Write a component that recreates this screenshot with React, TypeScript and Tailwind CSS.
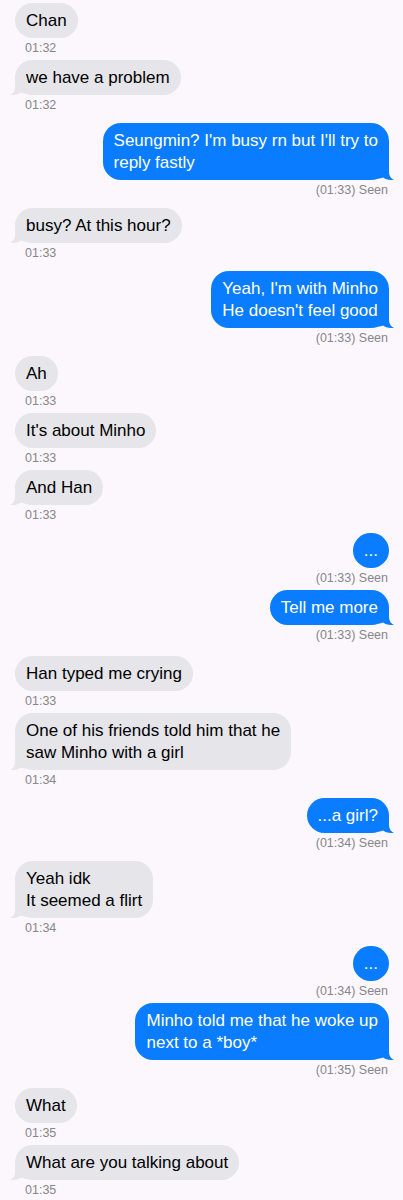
import React from "react";

type Msg = { from: "l" | "r"; text: string; time: string; tail: boolean; extra?: boolean };

const msgs: Msg[] = [
  { from: "l", text: "Chan", time: "01:32", tail: false },
  { from: "l", text: "we have a problem", time: "01:32", tail: true },
  { from: "r", text: "Seungmin? I'm busy rn but I'll try to\nreply fastly", time: "(01:33) Seen", tail: true },
  { from: "l", text: "busy? At this hour?", time: "01:33", tail: true },
  { from: "r", text: "Yeah, I'm with Minho\nHe doesn't feel good", time: "(01:33) Seen", tail: true },
  { from: "l", text: "Ah", time: "01:33", tail: false },
  { from: "l", text: "It's about Minho", time: "01:33", tail: false },
  { from: "l", text: "And Han", time: "01:33", tail: true },
  { from: "r", text: "...", time: "(01:33) Seen", tail: false },
  { from: "r", text: "Tell me more", time: "(01:33) Seen", tail: true },
  { from: "l", text: "Han typed me crying", time: "01:33", tail: false, extra: true },
  { from: "l", text: "One of his friends told him that he\nsaw Minho with a girl", time: "01:34", tail: true },
  { from: "r", text: "...a girl?", time: "(01:34) Seen", tail: true },
  { from: "l", text: "Yeah idk\nIt seemed a flirt", time: "01:34", tail: true },
  { from: "r", text: "...", time: "(01:34) Seen", tail: false },
  { from: "r", text: "Minho told me that he woke up\nnext to a *boy*", time: "(01:35) Seen", tail: true },
  { from: "l", text: "What", time: "01:35", tail: false },
  { from: "l", text: "What are you talking about", time: "01:35", tail: true },
];

function Tail({ side }: { side: "l" | "r" }) {
  const fill = side === "l" ? "#e5e5ea" : "#0a7cff";
  return (
    <svg
      width="20"
      height="18"
      viewBox="0 0 20 18"
      className={
        side === "l"
          ? "absolute bottom-0 left-[-5px]"
          : "absolute bottom-0 right-[-5px] -scale-x-100"
      }
    >
      <path
        d="M5 0 L5 10 C5 14 3 16.5 0 18 C4.5 18.3 8.5 17.2 11 15.5 C12.5 16.3 14 16.6 16 16.6 L16 0 Z"
        fill={fill}
      />
    </svg>
  );
}

export default function App() {
  return (
    <div
      className="min-h-screen bg-[#fcf7fc] pt-[3px] pb-4"
      style={{ fontFamily: '"Liberation Sans", Arial, sans-serif' }}
    >
      {msgs.map((m, i) => {
        const prev = msgs[i - 1];
        const mt =
          i === 0
            ? "mt-0"
            : m.extra
            ? "mt-[14px]"
            : prev.from === m.from
            ? "mt-[5px]"
            : "mt-[11px]";
        const isLeft = m.from === "l";
        return (
          <div key={i} className={`${mt} flex flex-col ${isLeft ? "items-start pl-[15px]" : "items-end pr-[14px]"}`}>
            <div
              className={`relative whitespace-pre-line rounded-[18px] px-[11px] pt-[7px] pb-[6px] text-[17px] leading-[22px] ${
                isLeft ? "bg-[#e5e5ea] text-black" : "bg-[#0a7cff] text-white"
              }`}
            >
              {m.tail && <Tail side={m.from} />}
              <span className="relative">{m.text}</span>
            </div>
            <div
              className={`mt-[3px] text-[12.5px] leading-[14px] text-[#86868b] ${
                isLeft ? "pl-[10px]" : "pr-[1px]"
              }`}
            >
              {m.time}
            </div>
          </div>
        );
      })}
    </div>
  );
}
